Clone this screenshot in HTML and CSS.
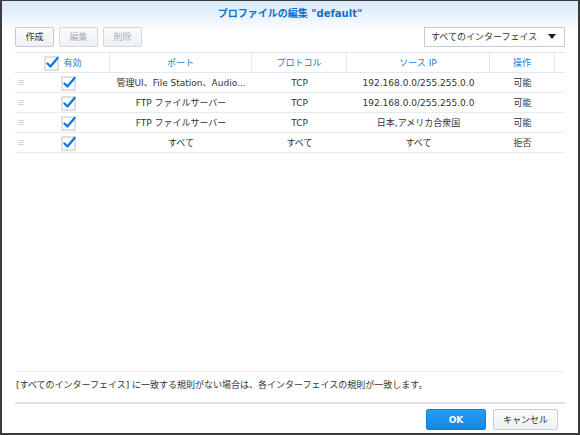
FILE: index.html
```html
<!DOCTYPE html>
<html lang="ja">
<head>
    <meta charset="UTF-8">
    <title>プロファイルの編集</title>
    <link rel="stylesheet" href="styles.css">
</head>
<body>
    <div class="window">
        <div class="title-bar">プロファイルの編集 "default"</div>

        <div class="toolbar">
            <button class="btn">作成</button>
            <button class="btn" disabled>編集</button>
            <button class="btn" disabled>削除</button>
            <div class="select">
                <span>すべてのインターフェイス</span>
                <span class="caret"></span>
            </div>
        </div>

        <div class="grid">
            <div class="row head">
                <div class="cell c-enable">
                    <svg class="check" viewBox="0 0 16 16"><rect x="1" y="2" width="13" height="13" fill="#fff" stroke="#b9c3cd"/><path d="M3.5 8.5 L6.5 11.5 L13.5 3" fill="none" stroke="#1479e3" stroke-width="2.4" stroke-linecap="round" stroke-linejoin="round"/></svg>
                    <span>有効</span>
                </div>
                <div class="cell">ポート</div>
                <div class="cell">プロトコル</div>
                <div class="cell">ソース IP</div>
                <div class="cell">操作</div>
                <div class="cell last"></div>
            </div>

            <div class="row">
                <div class="cell c-enable"><span class="handle"></span><svg class="check" viewBox="0 0 16 16"><rect x="1" y="2" width="13" height="13" fill="#fff" stroke="#b9c3cd"/><path d="M3.5 8.5 L6.5 11.5 L13.5 3" fill="none" stroke="#1479e3" stroke-width="2.4" stroke-linecap="round" stroke-linejoin="round"/></svg></div>
                <div class="cell">管理UI、File Station、Audio...</div>
                <div class="cell">TCP</div>
                <div class="cell">192.168.0.0/255.255.0.0</div>
                <div class="cell">可能</div>
                <div class="cell last"></div>
            </div>
            <div class="row">
                <div class="cell c-enable"><span class="handle"></span><svg class="check" viewBox="0 0 16 16"><rect x="1" y="2" width="13" height="13" fill="#fff" stroke="#b9c3cd"/><path d="M3.5 8.5 L6.5 11.5 L13.5 3" fill="none" stroke="#1479e3" stroke-width="2.4" stroke-linecap="round" stroke-linejoin="round"/></svg></div>
                <div class="cell">FTP ファイルサーバー</div>
                <div class="cell">TCP</div>
                <div class="cell">192.168.0.0/255.255.0.0</div>
                <div class="cell">可能</div>
                <div class="cell last"></div>
            </div>
            <div class="row">
                <div class="cell c-enable"><span class="handle"></span><svg class="check" viewBox="0 0 16 16"><rect x="1" y="2" width="13" height="13" fill="#fff" stroke="#b9c3cd"/><path d="M3.5 8.5 L6.5 11.5 L13.5 3" fill="none" stroke="#1479e3" stroke-width="2.4" stroke-linecap="round" stroke-linejoin="round"/></svg></div>
                <div class="cell">FTP ファイルサーバー</div>
                <div class="cell">TCP</div>
                <div class="cell">日本,アメリカ合衆国</div>
                <div class="cell">可能</div>
                <div class="cell last"></div>
            </div>
            <div class="row">
                <div class="cell c-enable"><span class="handle"></span><svg class="check" viewBox="0 0 16 16"><rect x="1" y="2" width="13" height="13" fill="#fff" stroke="#b9c3cd"/><path d="M3.5 8.5 L6.5 11.5 L13.5 3" fill="none" stroke="#1479e3" stroke-width="2.4" stroke-linecap="round" stroke-linejoin="round"/></svg></div>
                <div class="cell">すべて</div>
                <div class="cell">すべて</div>
                <div class="cell">すべて</div>
                <div class="cell">拒否</div>
                <div class="cell last"></div>
            </div>
        </div>

        <div class="spacer"></div>

        <p class="note">[すべてのインターフェイス] に一致する規則がない場合は、各インターフェイスの規則が一致します。</p>

        <div class="footer">
            <button class="btn primary">OK</button>
            <button class="btn cancel">キャンセル</button>
        </div>
    </div>
</body>
</html>
```

FILE: styles.css
```css
html, body {
    margin: 0;
    padding: 0;
    background: #fff;
}

body {
    font-family: "DejaVu Sans", "Noto Sans CJK JP", sans-serif;
    font-size: 9px;
    color: #333;
}

.window {
    box-sizing: border-box;
    width: 580px;
    height: 435px;
    border: 2px solid #3b3b3b;
    border-top-width: 1px;
    padding: 0 13px;
    display: flex;
    flex-direction: column;
    background: linear-gradient(to bottom, #d7e8f8 0px, #ffffff 32px);
}

.title-bar {
    height: 25px;
    line-height: 26px;
    text-align: center;
    font-size: 10px;
    font-weight: bold;
    color: #0f6fd4;
}

.toolbar {
    display: flex;
    align-items: center;
    gap: 5px;
    height: 21px;
}

.btn {
    box-sizing: border-box;
    height: 20px;
    padding: 0;
    border: 1px solid #c4ccd5;
    border-radius: 2px;
    background: linear-gradient(to bottom, #fafbfc, #eef1f4);
    font-family: "DejaVu Sans", "Noto Sans CJK JP", sans-serif;
    font-size: 9px;
    color: #333;
}

.toolbar .btn {
    width: 39px;
}

.btn:disabled {
    color: #aab2bb;
    border-color: #d3d9df;
}

.select {
    box-sizing: border-box;
    margin-left: auto;
    width: 141px;
    height: 20px;
    border: 1px solid #c4ccd5;
    background: #fff;
    display: flex;
    align-items: center;
    justify-content: space-between;
    padding: 0 8px 0 6px;
    color: #333;
}

.caret {
    width: 0;
    height: 0;
    border-left: 4px solid transparent;
    border-right: 4px solid transparent;
    border-top: 5px solid #222;
}

.grid {
    margin-top: 5px;
}

.row {
    display: grid;
    grid-template-columns: 95px 142px 95px 143px 65px 10px;
    height: 19px;
    border-bottom: 1px solid #e6ebf0;
}

.row .cell {
    display: flex;
    align-items: center;
    justify-content: center;
    white-space: nowrap;
    overflow: hidden;
}

.row.head {
    border-top: 1px solid #e3e9f0;
    border-bottom: 1px solid #e3e9f0;
    color: #1282e0;
}

.row.head .cell {
    border-right: 1px solid #e3e9f0;
}

.row.head .cell.last {
    border-right: none;
}

.c-enable {
    position: relative;
    gap: 3px;
}

.check {
    width: 16px;
    height: 16px;
}

.row .c-enable .check {
    margin-left: 13px;
}

.row.head .c-enable .check {
    margin-left: 2px;
}

.handle {
    position: absolute;
    left: 3px;
    top: 7px;
    width: 6px;
    height: 5px;
    border-top: 1px solid #d3d7db;
    border-bottom: 1px solid #d3d7db;
    box-sizing: border-box;
}

.handle::after {
    content: "";
    position: absolute;
    left: 0;
    right: 0;
    top: 1px;
    border-top: 1px solid #d3d7db;
}

.spacer {
    flex: 1;
}

.note {
    margin: 0;
    padding: 6px 0 0 1px;
    height: 31px;
    border-top: 1px solid #eef1f5;
    box-sizing: border-box;
    color: #333;
}

.footer {
    display: flex;
    justify-content: flex-end;
    gap: 7px;
    border-top: 2px solid #dde1e5;
    padding: 5px 7px 0 0;
    height: 31px;
    box-sizing: border-box;
}

.footer .btn {
    height: 21px;
}

.primary {
    width: 60px;
    border-color: #0d7fdc;
    background: linear-gradient(to bottom, #2a9cf2, #1088e6);
    color: #fff;
    font-weight: bold;
}

.cancel {
    width: 65px;
}
```
